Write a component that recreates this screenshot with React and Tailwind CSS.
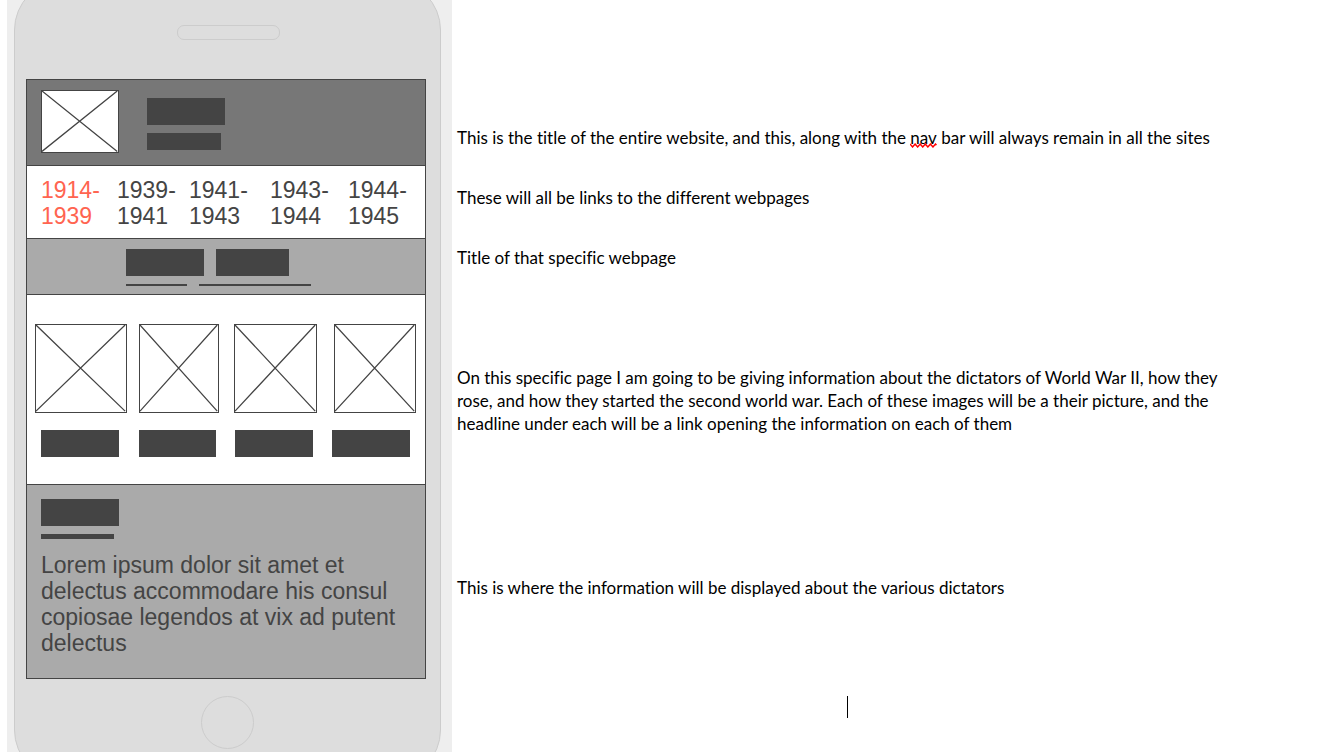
const images = [
  { column: 'w-[92px]', box: 'w-[92px]', bar: 'ml-[6px] w-[78px]' },
  { column: 'ml-3 w-[80px]', box: 'w-[80px]', bar: 'w-[77px]' },
  { column: 'ml-[15px] w-[83px]', box: 'w-[83px]', bar: 'ml-px w-[78px]' },
  { column: 'ml-[15px] w-[84px]', box: 'ml-[2px] w-[82px]', bar: 'w-[78px]' },
];

const periods = [
  ['1914-', '1939'],
  ['1939-', '1941'],
  ['1941-', '1943'],
  ['1943-', '1944'],
  ['1944-', '1945'],
];

function ImageBox({ className }) {
  return (
    <div className={`border border-[#444] bg-white ${className}`}>
      <svg className="block h-full w-full" viewBox="0 0 100 100" preserveAspectRatio="none" aria-hidden="true">
        <path d="M0 0L99 99M99 0L0 99" stroke="#444" strokeWidth="1.3" fill="none" vectorEffect="non-scaling-stroke" />
      </svg>
    </div>
  );
}

function Bar({ className }) {
  return <div className={`bg-[#444] ${className}`} />;
}

function Phone() {
  return (
    <div className="-mt-5 -mb-7 flex w-[427px] flex-col rounded-[50px] border border-[#ccc] bg-[#ddd] pr-[14px] pl-[11px]">
      <div className="mt-11 ml-[151px] h-[15px] w-[103px] rounded-[7px] border border-[#ccc]" />
      <div className="mt-[39px] border border-[#444] font-['Liberation_Sans',Arial,sans-serif] text-[23px] leading-[26px] text-[#444]">
        <header className="flex border-b border-[#444] bg-[#777] px-[14px] pt-[10px] pb-3">
          <ImageBox className="h-[63px] w-[78px]" />
          <div className="ml-7 flex flex-col gap-2 pt-2">
            <Bar className="h-[27px] w-[78px]" />
            <Bar className="h-[17px] w-[74px]" />
          </div>
        </header>
        <nav className="grid grid-cols-[76px_72px_81px_78px_1fr] border-b border-[#444] bg-white pt-[11px] pb-[9px] pl-[14px]">
          {periods.map(([from, to], i) => (
            <a key={from} href="#" className={i === 0 ? 'text-[#ff6450]' : ''}>
              {from}
              <br />
              {to}
            </a>
          ))}
        </nav>
        <div className="flex flex-col gap-2 border-b border-[#444] bg-[#aaa] pt-[10px] pb-2 pl-[99px]">
          <div className="flex gap-3">
            <Bar className="h-[27px] w-[78px]" />
            <Bar className="h-[27px] w-[73px]" />
          </div>
          <div className="flex gap-3">
            <Bar className="h-[2px] w-[61px]" />
            <Bar className="h-[2px] w-[112px]" />
          </div>
        </div>
        <section className="flex border-b border-[#444] bg-white pt-[29px] pb-[27px] pl-2">
          {images.map((image, i) => (
            <div key={i} className={`flex flex-col gap-[17px] ${image.column}`}>
              <ImageBox className={`h-[89px] ${image.box}`} />
              <Bar className={`h-[27px] ${image.bar}`} />
            </div>
          ))}
        </section>
        <section className="bg-[#aaa] px-[14px] pt-[14px] pb-[22px]">
          <Bar className="h-[27px] w-[78px]" />
          <Bar className="mt-2 h-[5px] w-[73px]" />
          <p className="mt-[13px]">Lorem ipsum dolor sit amet et delectus accommodare his consul copiosae legendos at vix ad putent delectus</p>
        </section>
      </div>
      <div className="mt-[17px] mb-[30px] ml-[175px] h-[53px] w-[53px] rounded-full border border-[#ccc]" />
    </div>
  );
}

function Misspelled({ children }) {
  return (
    <span className="relative">
      {children}
      <svg className="absolute bottom-0 left-0 h-[5px] w-full" viewBox="0 0 26 5" preserveAspectRatio="none" aria-hidden="true">
        <path d="M0 1L2.500 4L5 1L7.500 4L10 1L12.500 4L15 1L17.500 4L20 1L22.500 4L25 1L26 2" fill="none" stroke="#f00" strokeWidth="1.4" />
      </svg>
    </span>
  );
}

export default function App() {
  return (
    <main className="flex min-h-screen items-start overflow-hidden bg-white">
      <div className="shrink-0 pl-[7px]">
        <div className="bg-[#eee] pr-[11px] pl-[7px]">
          <Phone />
        </div>
      </div>
      <article className="ml-[5px] min-w-0 flex-1 pt-[126px] font-[Lato,Carlito,sans-serif] text-[17px] leading-[23px] text-black [font-variant-ligatures:none]">
        <p>
          This is the title of the entire website, and this, along with the <Misspelled>nav</Misspelled> bar will always remain in all the sites
        </p>
        <p className="mt-[37px]">These will all be links to the different webpages</p>
        <p className="mt-[37px]">Title of that specific webpage</p>
        <p className="mt-[97px] max-w-[780px]">
          On this specific page I am going to be giving information about the dictators of World War II, how they rose, and how they started the second world war. Each of these images will be a their picture, and the headline under each will be a link opening the information on each of them
        </p>
        <p className="mt-[141px]">This is where the information will be displayed about the various dictators</p>
        <div className="mt-[97px] ml-[390px] h-[22px] w-px bg-black" />
      </article>
    </main>
  );
}
